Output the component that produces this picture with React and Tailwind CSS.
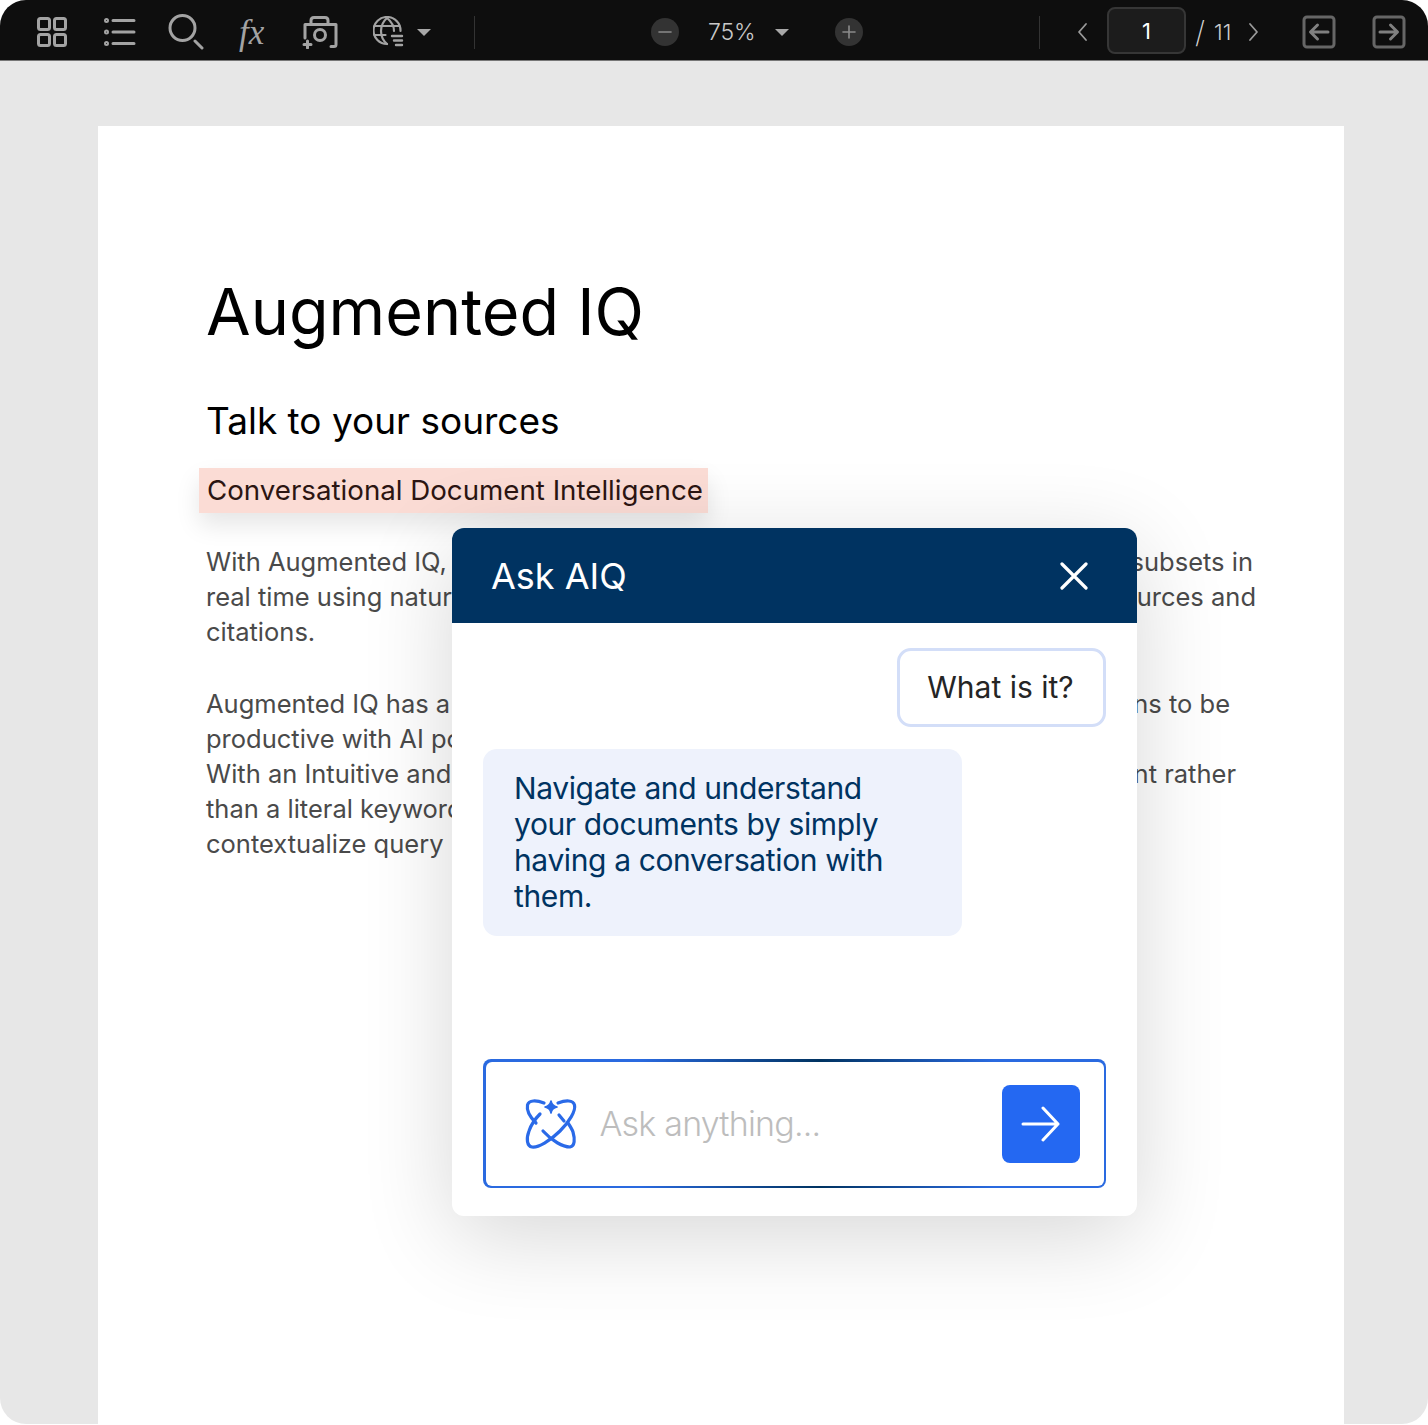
const sans = "font-['Inter',sans-serif]";

function GridIcon() {
  return (
    <svg width="32" height="32" viewBox="0 0 32 32" fill="none" stroke="#a3a3a3" strokeWidth="3">
      <rect x="2.5" y="2.5" width="11" height="11" rx="2" />
      <rect x="18.5" y="2.5" width="11" height="11" rx="2" />
      <rect x="2.5" y="18.5" width="11" height="11" rx="2" />
      <rect x="18.5" y="18.5" width="11" height="11" rx="2" />
    </svg>
  );
}

function ListIcon() {
  return (
    <svg width="32" height="32" viewBox="0 0 32 32" fill="none" stroke="#a3a3a3" strokeWidth="3" strokeLinecap="round">
      <path d="M9 4.5h21M9 16h21M9 27.5h21" />
      <circle cx="2.5" cy="4.5" r="1" />
      <circle cx="2.5" cy="16" r="1" />
      <circle cx="2.5" cy="27.5" r="1" />
    </svg>
  );
}

function SearchIcon() {
  return (
    <svg width="36" height="36" viewBox="0 0 36 36" fill="none" stroke="#a3a3a3" strokeWidth="3" strokeLinecap="round">
      <circle cx="14.5" cy="14" r="12.5" />
      <path d="M27 27l7 7" />
    </svg>
  );
}

function CameraIcon() {
  return (
    <svg width="36" height="34" viewBox="0 0 36 34" fill="none" stroke="#a3a3a3" strokeWidth="3" strokeLinecap="round" strokeLinejoin="round">
      <path d="M3 23V9.5h6V5.5q0-3 3-3h11q3 0 3 3v4h8v20q0 2-2 2h-3" />
      <path d="M9 9.5h17" />
      <circle cx="18" cy="20" r="5.5" />
      <path d="M5.5 26v7M2 29.5h7" />
    </svg>
  );
}

function GlobeIcon() {
  return (
    <svg width="32" height="32" viewBox="0 0 32 32" fill="none" stroke="#a3a3a3" strokeWidth="2.2" strokeLinecap="round">
      <path d="M27.5 15A13.5 13.5 0 1 0 14 28" />
      <path d="M14 2c-8 7-8 19 0 26M14 2c5 4 7 9 7 13M1.5 10h25M1.5 19h11" />
      <path d="M19 20h10M21 24.5h8M23 29h6" strokeWidth="2.4" />
    </svg>
  );
}

function Caret() {
  return <div className="h-0 w-0 border-x-[7px] border-t-[7px] border-x-transparent border-t-[#a8a8a8]" />;
}

function Chevron({ dir }) {
  return (
    <svg width="12" height="20" viewBox="0 0 12 20" fill="none" stroke="#9a9a9a" strokeWidth="1.8" strokeLinecap="round" strokeLinejoin="round">
      <path d={dir === "left" ? "M10 2L3 10l7 8" : "M2 2l7 8-7 8"} />
    </svg>
  );
}

function PanelArrow({ dir }) {
  return (
    <svg width="34" height="34" viewBox="0 0 34 34" fill="none" stroke="#666666" strokeWidth="3" strokeLinecap="round" strokeLinejoin="round">
      <rect x="2" y="2" width="30" height="30" rx="3" />
      <path stroke="#808080" d={dir === "left" ? "M26 17H9M15.5 10l-7 7 7 7" : "M8 17h17M18.5 10l7 7-7 7"} />
    </svg>
  );
}

function ZoomButton({ plus }) {
  return (
    <div className="flex h-[28px] w-[28px] items-center justify-center rounded-full bg-[#333333]">
      <svg width="14" height="14" viewBox="0 0 14 14" fill="none" stroke="#8b8b8b" strokeWidth="1.6" strokeLinecap="round">
        <path d={plus ? "M1 7h12M7 1v12" : "M1 7h12"} />
      </svg>
    </div>
  );
}

function Toolbar() {
  return (
    <div className={`flex h-[61px] items-center border-b border-[#777777] bg-[#0e0e0e] pl-[36px] pt-[4px] ${sans}`}>
      <GridIcon />
      <div className="ml-[36px]"><ListIcon /></div>
      <div className="ml-[32px]"><SearchIcon /></div>
      <div className="ml-[35px] w-[30px] font-['Liberation_Serif',serif] text-[35px] italic leading-none text-[#a3a3a3]">fx</div>
      <div className="ml-[33px]"><CameraIcon /></div>
      <div className="ml-[35px]"><GlobeIcon /></div>
      <div className="ml-[12px]"><Caret /></div>
      <div className="ml-[43px] h-[33px] w-px bg-[#333333]" />
      <div className="ml-[176px]"><ZoomButton /></div>
      <div className="ml-[29px] w-[46px] text-[23px] font-light leading-none tracking-[-0.2px] text-[#c9c9c9]">75%</div>
      <div className="ml-[21px]"><Caret /></div>
      <div className="ml-[46px]"><ZoomButton plus /></div>
      <div className="ml-[176px] h-[33px] w-px bg-[#333333]" />
      <div className="ml-[36px]"><Chevron dir="left" /></div>
      <div className="-mt-[4px] ml-[19px] flex h-[47px] w-[79px] items-center justify-center rounded-[8px] border-2 border-[#363636] bg-[#1c1c1c] pt-[2px] text-[22px] leading-none text-white">1</div>
      <div className="ml-[9px] text-[30px] font-extralight leading-none text-[#d6d6d6]">/</div>
      <div className="ml-[9px] w-[18px] text-[22px] font-light leading-none text-[#c9c9c9]">11</div>
      <div className="ml-[16px]"><Chevron dir="right" /></div>
      <div className="ml-[42px]"><PanelArrow dir="left" /></div>
      <div className="ml-[36px]"><PanelArrow dir="right" /></div>
    </div>
  );
}

function Line({ left, right }) {
  return (
    <div className="flex h-[35.2px] items-center justify-between whitespace-nowrap">
      <span>{left}</span>
      {right && <span>{right}</span>}
    </div>
  );
}

function Paper() {
  return (
    <div className={`ml-[98px] mt-[65px] h-[1298px] w-[1246px] bg-white pl-[109px] pt-[147px] ${sans}`}>
      <h1 className="-ml-[1px] text-[64.7px] font-normal leading-[78px] text-black">Augmented IQ</h1>
      <h2 className="-ml-[1px] mt-[48px] text-[37px] font-normal leading-[44px] text-black">Talk to your sources</h2>
      <div className="-ml-[8px] mt-[25px] flex h-[45px] w-[509px] items-center whitespace-nowrap bg-[#fbdcd5] pl-[8px] text-[27.7px] leading-none text-[#2c1512] shadow-[0_12px_24px_rgba(0,0,0,0.1)]">
        Conversational Document Intelligence
      </div>
      <div className="-ml-[1px] mt-[31px] w-[1050px] text-[25.5px] leading-[35.2px] text-[#4a4a4a]">
        <div className="w-[1047px]"><Line left="With Augmented IQ," right="subsets in" /></div>
        <div className="w-[1050px]"><Line left="real time using natural" right="sources and" /></div>
        <Line left="citations." />
        <div className="mt-[36px] w-[1024px]"><Line left="Augmented IQ has a" right="ns to be" /></div>
        <Line left="productive with AI powered" />
        <div className="w-[1030px]"><Line left="With an Intuitive and" right="nt rather" /></div>
        <Line left="than a literal keyword" />
        <Line left="contextualize query results" />
      </div>
    </div>
  );
}

function AiqIcon() {
  return (
    <svg width="50" height="50" viewBox="0 0 50 50" fill="none" stroke="#2a6ae8" strokeWidth="3.2" strokeLinecap="round" className="overflow-visible">
      <path d="M32 4C40 1 47 1 48.5 6 50 12 43 23 34 32 24 42 12 49 6 48 1 47 0 40 3 32 5 26 9 20 14 15" />
      <path d="M18 4C10 1 3 1 1.5 6 .5 11 4 18 10 24" />
      <path d="M17 32C26 42 37 48 44 48 49 47 49 40 47 33 46 30 44 27 42 24" />
      <path d="M33 16l5 6" />
      <path d="M25 2Q26 7 31 8 26 9 25 14 24 9 19 8 24 7 25 2z" fill="#2a6ae8" strokeWidth="1.6" strokeLinejoin="round" />
    </svg>
  );
}

function Dialog() {
  return (
    <div className={`absolute left-[452px] top-[528px] flex h-[688px] w-[685px] flex-col overflow-hidden rounded-[12px] bg-white shadow-[0_20px_90px_rgba(0,0,0,0.16)] ${sans}`}>
      <div className="flex h-[95px] shrink-0 items-center justify-between bg-[#003361] pl-[39px] pr-[49px]">
        <span className="text-[36px] leading-none text-white">Ask AIQ</span>
        <svg width="28" height="28" viewBox="0 0 28 28" fill="none" stroke="white" strokeWidth="3.2" strokeLinecap="round">
          <path d="M2 2l24 24M26 2L2 26" />
        </svg>
      </div>
      <div className="flex flex-1 flex-col px-[31px] pb-[28px] pt-[25px]">
        <div className="flex justify-end">
          <div className="flex h-[79px] w-[209px] items-center justify-center rounded-[14px] border-[3px] border-[#d3def8] pb-[2px] pr-[2px] text-[30px] leading-none text-[#252525]">
            What is it?
          </div>
        </div>
        <div className="mt-[22px] h-[187px] w-[479px] rounded-[14px] bg-[#eef2fc] pl-[31px] pt-[21px] text-[30px] leading-[36px] tracking-[-0.38px] text-[#003361]">
          Navigate and understand
          <br />
          your documents by simply
          <br />
          having a conversation with
          <br />
          them.
        </div>
        <div className="mt-auto rounded-[8px] bg-[linear-gradient(90deg,#2a6ae0_25%,#003361_54%,#2a6ae0_82%)] p-[2.5px]">
          <div className="flex h-[124px] items-center rounded-[6px] bg-white pl-[40px] pr-[24px]">
            <AiqIcon />
            <span className="ml-[24px] text-[34px] font-light leading-none tracking-[-0.8px] text-[#bdbdbd]">Ask anything...</span>
            <div className="ml-auto flex h-[78px] w-[78px] items-center justify-center rounded-[8px] bg-[#2468f2]">
              <svg width="40" height="36" viewBox="0 0 40 36" fill="none" stroke="white" strokeWidth="3" strokeLinecap="round" strokeLinejoin="round">
                <path d="M2 18h35M22 2l15 16-15 16" />
              </svg>
            </div>
          </div>
        </div>
      </div>
    </div>
  );
}

export default function App() {
  return (
    <div className="relative h-[1425px] w-[1428px] overflow-hidden bg-white">
      <div className="h-[1424px] overflow-hidden rounded-[26px] bg-[#e7e7e7]">
        <Toolbar />
        <Paper />
      </div>
      <Dialog />
    </div>
  );
}
